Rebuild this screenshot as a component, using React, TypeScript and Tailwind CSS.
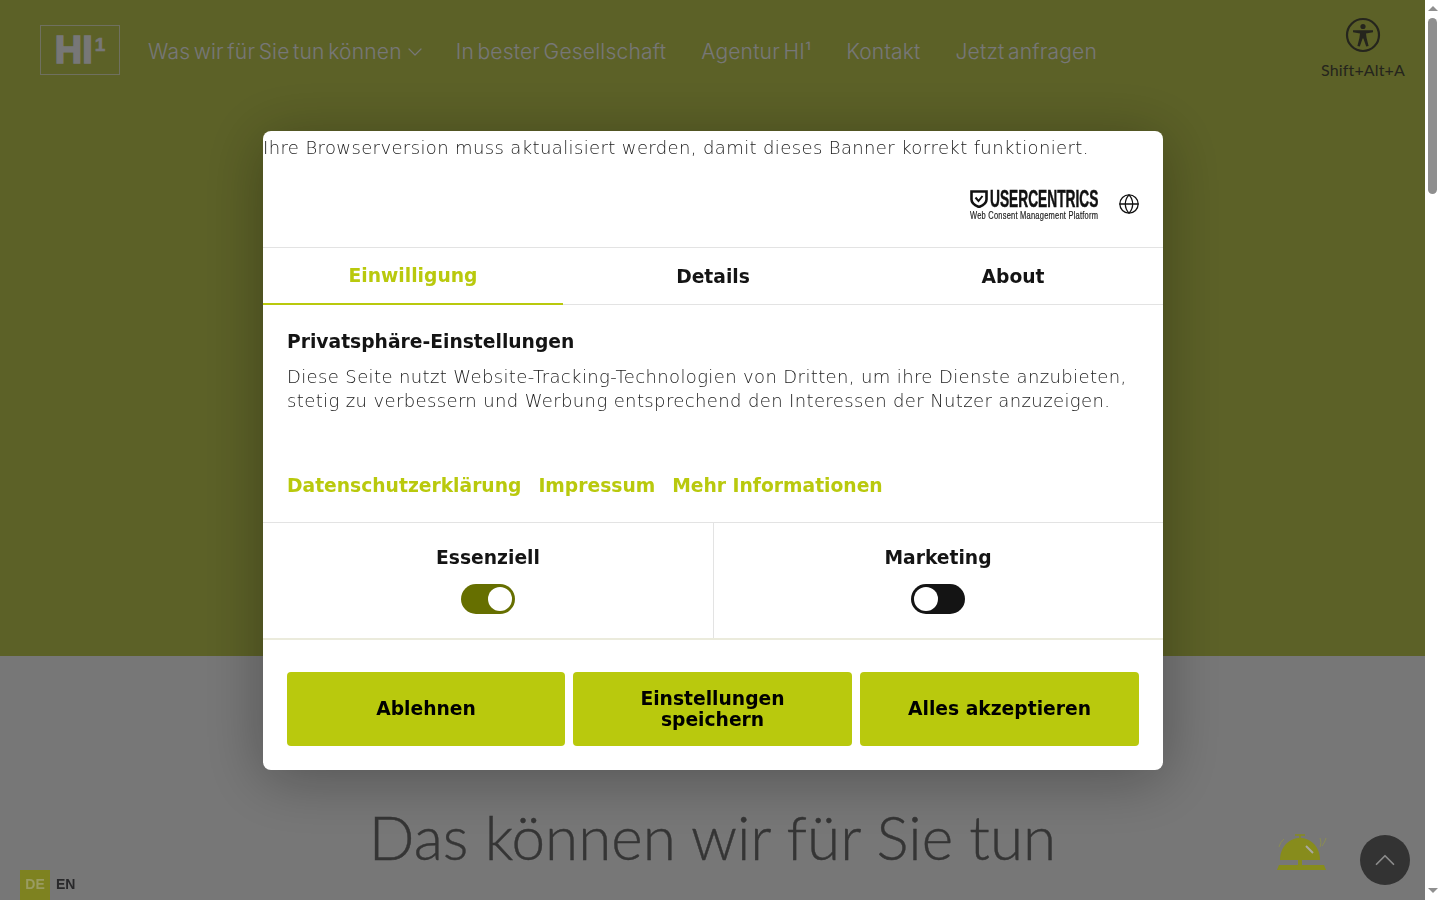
import React from 'react';
import { ChevronDown, ChevronUp, Globe } from 'lucide-react';

const navItems = ['In bester Gesellschaft', 'Agentur HI¹', 'Kontakt', 'Jetzt anfragen'];

const AccessIcon = () => (
  <svg viewBox="0 0 36 36" className="w-[36px] h-[36px]" fill="none">
    <circle cx="18" cy="18" r="16" stroke="#4a4a3a" strokeWidth="2.2" />
    <circle cx="18" cy="9.5" r="2.6" fill="#4a4a3a" />
    <path
      d="M8 13.2 L28 13.2 L28 15.2 L21 16.6 L21.6 21 L23.6 29 L21.2 29.6 L18.4 21.5 L17.6 21.5 L14.8 29.6 L12.4 29 L14.4 21 L15 16.6 L8 15.2 Z"
      fill="#4a4a3a"
    />
  </svg>
);

const BellIcon = () => (
  <svg viewBox="0 0 51 36" className="w-[51px] h-[36px]" fill="none">
    <path d="M19 1 h10 M24 1 v3" stroke="#878c1c" strokeWidth="1.5" />
    <path d="M4 26 C4 12 14 4 24 4 C34 4 44 12 44 26 Z" fill="#878c1c" />
    <path d="M30 12 L37 19" stroke="#a9a9a0" strokeWidth="2" />
    <path d="M22 26 h4 v5 h-4 z" fill="#878c1c" />
    <path d="M3 31 H48 L50 36 H1 Z" fill="#878c1c" />
    <path d="M3 13 Q4 8 8 5 M44 13 Q46 8 44 4 M46 12 Q49 8 50 4" stroke="#8a8c50" strokeWidth="1" />
  </svg>
);

const ShieldMark = () => (
  <svg viewBox="0 0 18 18" className="w-[18px] h-[18px] shrink-0" fill="none">
    <path d="M1.5 1.5 H16.5 V9.5 C16.5 13 13 15.5 9 17 C5 15.5 1.5 13 1.5 9.5 Z" stroke="#111" strokeWidth="2.6" />
    <path d="M5.5 7.5 L8.5 11 L12.5 6" stroke="#111" strokeWidth="2" />
  </svg>
);

const Toggle = ({ on }: { on: boolean }) => (
  <div
    className={`w-[54px] h-[30px] rounded-full flex items-center px-[3px] ${
      on ? 'bg-[#666f00] justify-end' : 'bg-[#141414] justify-start'
    }`}
  >
    <div className="w-[24px] h-[24px] rounded-full bg-white" />
  </div>
);

const ConsentBanner = () => (
  <div className="fixed inset-y-0 left-0 right-[14px] flex items-start justify-center pt-[131px] font-['DejaVu_Sans',sans-serif]">
    <div className="w-[900px] h-[639px] bg-white rounded-lg overflow-hidden flex flex-col shadow-[0_8px_60px_rgba(0,0,0,0.3)] text-[#141414]">
      <p className="h-[34px] leading-[34px] text-[18px] font-extralight tracking-[0.375px] text-[#222] whitespace-nowrap">
        Ihre Browserversion muss aktualisiert werden, damit dieses Banner korrekt funktioniert.
      </p>

      {/* Logo row */}
      <div className="h-[82px] flex items-start justify-end pt-[25px] pr-[23px] gap-[20px]">
        <div className="w-[128px] flex flex-col">
          <div className="flex items-center gap-[2px] h-[18px]">
            <ShieldMark />
            <span className="inline-block origin-left scale-x-[0.572] font-['Liberation_Sans',sans-serif] font-bold text-[24px] leading-[18px] text-[#111] whitespace-nowrap [-webkit-text-stroke:0.5px_#111]">
              USERCENTRICS
            </span>
          </div>
          <span className="mt-[2px] inline-block origin-left scale-x-[0.75] font-['Liberation_Sans',sans-serif] text-[10px] leading-[12px] tracking-[0.3px] text-[#222] whitespace-nowrap [-webkit-text-stroke:0.2px_#222]">
            Web Consent Management Platform
          </span>
        </div>
        <Globe className="w-[22px] h-[22px] mt-[3px] text-[#111]" strokeWidth={1.4} />
      </div>

      {/* Tabs */}
      <div className="h-[58px] shrink-0 grid grid-cols-3 border-t border-[#e3e3e3] text-[18.72px] font-bold text-center">
        <div className="border-b-2 border-[#b9c90d] text-[#b9c90d] pt-[14px] leading-[28px]">Einwilligung</div>
        <div className="border-b border-[#e3e3e3] pt-[15px] leading-[28px]">Details</div>
        <div className="border-b border-[#e3e3e3] pt-[15px] leading-[28px]">About</div>
      </div>

      {/* Text */}
      <div className="h-[218px] shrink-0 px-[24px] pt-[25px] border-b border-[#e3e3e3]">
        <h2 className="text-[18.72px] font-bold leading-[24px]">Privatsphäre-Einstellungen</h2>
        <p className="mt-[11px] text-[18px] leading-[24px] font-extralight tracking-[0.375px] text-[#222]">
          Diese Seite nutzt Website-Tracking-Technologien von Dritten, um ihre Dienste anzubieten,
          <br />
          stetig zu verbessern und Werbung entsprechend den Interessen der Nutzer anzuzeigen.
        </p>
        <div className="mt-[61px] flex gap-[17px] text-[18.72px] font-bold leading-[24px] text-[#b9c90d]">
          <span>Datenschutzerklärung</span>
          <span>Impressum</span>
          <span>Mehr Informationen</span>
        </div>
      </div>

      {/* Categories */}
      <div className="h-[117px] shrink-0 grid grid-cols-[451px_449px] border-b-2 border-[#ebebdc]">
        <div className="flex flex-col items-center pt-[23px] gap-[14px] border-r border-[#e3e3e3]">
          <span className="text-[18.72px] font-bold leading-[24px]">Essenziell</span>
          <Toggle on />
        </div>
        <div className="flex flex-col items-center pt-[23px] pr-[1px] gap-[14px]">
          <span className="text-[18.72px] font-bold leading-[24px]">Marketing</span>
          <Toggle on={false} />
        </div>
      </div>

      {/* Buttons */}
      <div className="flex-1 px-[24px] pt-[32px] pb-[24px] grid grid-cols-[278px_279px_279px] gap-[8px] text-[18.72px] font-bold leading-[21px] text-black text-center">
        {['Ablehnen', 'Einstellungen speichern', 'Alles akzeptieren'].map((label) => (
          <button key={label} className="bg-[#b9c90d] rounded-[4px] px-[30px] pb-[1px] flex items-center justify-center">
            {label}
          </button>
        ))}
      </div>
    </div>
  </div>
);

export default function App() {
  return (
    <div className="h-[900px] w-[1440px] flex overflow-hidden bg-white">
      <div className="w-[1425px] h-full flex flex-col font-['Lato',sans-serif]">
        {/* Hero */}
        <div className="h-[656px] shrink-0 bg-[#b8c24f]">
          <header className="flex items-start pl-[40px] pr-[20px] pt-[25px]">
            <div className="w-[80px] h-[50px] border border-[#eeeeee]/70 flex items-center justify-center gap-[2px] text-[#eeeeee] font-['Liberation_Sans',sans-serif] font-bold">
              <span className="text-[38px] leading-[38px] [-webkit-text-stroke:1.5px_#eeeeee]">HI</span>
              <span className="text-[19px] leading-[19px] self-start mt-[9px] [-webkit-text-stroke:0.5px_#eeeeee]">1</span>
            </div>
            <nav className="ml-[28px] flex items-center gap-[35px] h-[53px] text-[21px] font-[350] tracking-[0.2px] [word-spacing:-2.6px] font-['Inter',sans-serif] text-[#eeeeee] whitespace-nowrap">
              <span className="flex items-center gap-[1px]">
                Was wir für Sie tun können
                <ChevronDown className="w-[24px] h-[24px] -mr-[6px]" strokeWidth={1.2} />
              </span>
              {navItems.map((item) => (
                <span key={item}>{item}</span>
              ))}
            </nav>
            <div className="ml-auto -mt-[8px] flex flex-col items-center text-[16px] leading-[20px] tracking-[0.15px] text-[#4a4a3a]">
              <AccessIcon />
              <span className="mt-[7px]">Shift+Alt+A</span>
            </div>
          </header>
        </div>

        {/* Section below hero */}
        <div className="flex-1 bg-[#eeeeee] flex justify-center pt-[145px]">
          <h1 className="text-[60.2px] leading-[72px] font-light text-[#6a6a6a] whitespace-nowrap [-webkit-text-stroke:0.4px_#6a6a6a]">
            Das können wir für Sie tun
          </h1>
        </div>
      </div>

      {/* Scrollbar */}
      <div className="w-[15px] h-full flex flex-col items-center justify-between shrink-0 bg-white relative z-10">
        <div className="flex flex-col items-center w-full">
          <div className="mt-[6px] w-0 h-0 border-x-[5px] border-x-transparent border-b-[5px] border-b-[#8f8f8f]" />
          <div className="mt-[7px] w-[9px] h-[176px] rounded-full bg-[#8f8f8f]" />
        </div>
        <div className="mb-[7px] w-0 h-0 border-x-[5px] border-x-transparent border-t-[5px] border-t-[#8f8f8f]" />
      </div>

      {/* Backdrop */}
      <div className="fixed inset-y-0 left-0 right-[15px] bg-black/50" />

      <ConsentBanner />

      {/* Language switch */}
      <div className="fixed left-[20px] bottom-0 flex items-center gap-[6px] font-['Liberation_Sans',sans-serif] font-bold text-[14px]">
        <span className="w-[30px] h-[30px] pb-[2px] flex items-center justify-center bg-[#7e8220] text-[#9a9c62]">DE</span>
        <span className="pb-[2px] text-[#28282a]">EN</span>
      </div>

      {/* Floating actions */}
      <div className="fixed right-[113px] top-[834px]">
        <BellIcon />
      </div>
      <button className="fixed right-[30px] bottom-[15px] w-[50px] h-[50px] rounded-full bg-[#333333] flex items-center justify-center text-[#8c8c8c]">
        <ChevronUp className="w-[34px] h-[34px]" strokeWidth={1.2} />
      </button>
    </div>
  );
}
